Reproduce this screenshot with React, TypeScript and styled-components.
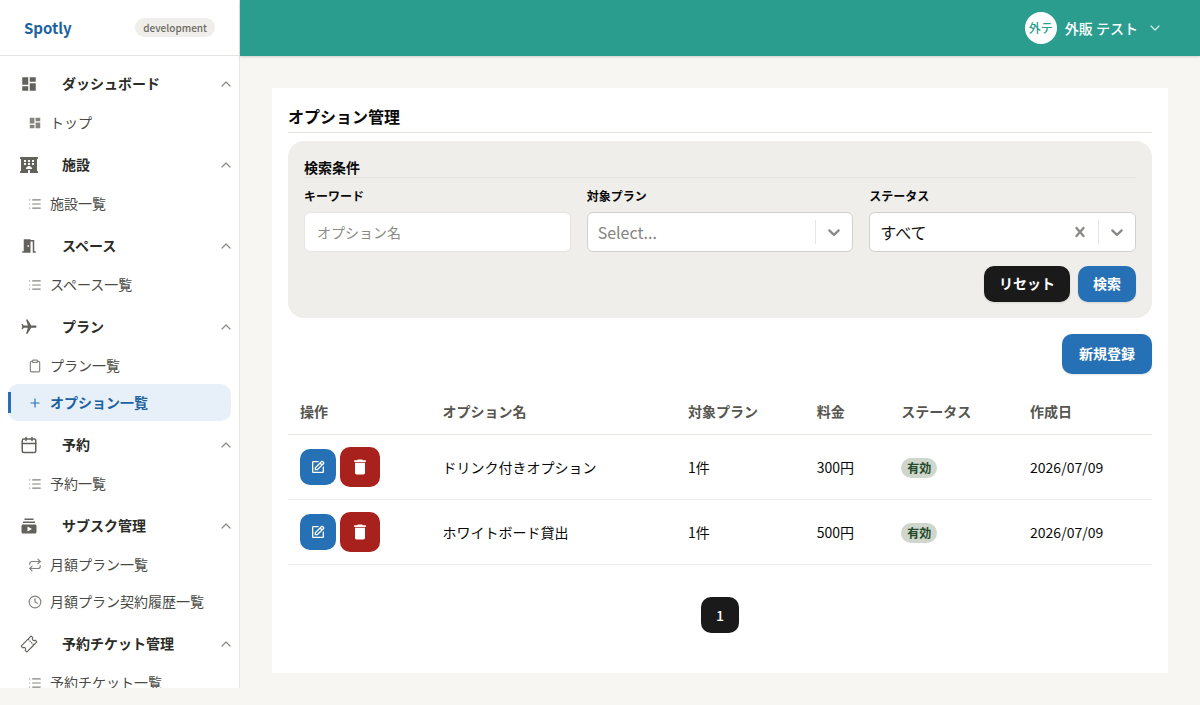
import React from "react";
import styled, { createGlobalStyle, css } from "styled-components";
import { MdDashboard, MdMeetingRoom, MdSubscriptions, MdDelete, MdFlight } from "react-icons/md";
import { FaHotel } from "react-icons/fa";
import { IoTicketOutline } from "react-icons/io5";
import { Calendar, Clipboard, Clock, List, Plus, Repeat } from "lucide-react";
import { BiEdit } from "react-icons/bi";

const GlobalStyle = createGlobalStyle`
  *, *::before, *::after { box-sizing: border-box; }
  body {
    margin: 0;
    background: #f7f6f3;
    color: #0a0a0a;
    font-family: "Noto Sans CJK JP", "Noto Sans", sans-serif;
    font-size: 14px;
    line-height: 20px;
  }
  button, input, select { font: inherit; color: inherit; margin: 0; }
  button { cursor: pointer; }
  h1, h2, p, ul { margin: 0; padding: 0; }
  ul { list-style: none; }
`;

const Shell = styled.div`
  display: flex;
  min-height: 100vh;
  align-items: flex-start;
`;

const Sidebar = styled.aside`
  flex: 0 0 240px;
  height: calc(100vh - 17px);
  overflow: hidden;
  background: #fff;
  border-right: 1px solid #e5e5e2;
`;

const Brand = styled.div`
  display: flex;
  align-items: center;
  justify-content: space-between;
  height: 56px;
  padding: 0 24px;
  border-bottom: 1px solid #e5e5e2;
`;

const Logo = styled.a`
  color: #1c629f;
  font-size: 15px;
  line-height: 24px;
  font-weight: 700;
  text-decoration: none;
`;

const EnvBadge = styled.span`
  padding: 2px 8px;
  border-radius: 10px;
  background: #efeeea;
  color: #6b6a65;
  font-size: 10px;
  line-height: 15px;
  font-weight: 500;
`;

const Nav = styled.nav`
  display: flex;
  flex-direction: column;
  gap: 4px;
  padding: 8px;
`;

const NavText = styled.span`
  padding-bottom: 2px;
`;

const GroupButton = styled.button`
  display: flex;
  align-items: center;
  width: 100%;
  height: 40px;
  padding: 0 0 0 12px;
  border: 0;
  background: none;
  color: #2b2b27;
  font-weight: 700;
  text-align: left;

  & > svg:first-child { color: #62615c; margin-right: 24px; }
  & > svg:last-child { color: #8b8a85; margin-left: auto; }
`;

const ItemLink = styled.a<{ $active?: boolean }>`
  position: relative;
  display: flex;
  align-items: center;
  gap: 8px;
  height: 37px;
  padding: 0 20px;
  border-radius: 10px;
  color: #4a4a45;
  text-decoration: none;
  white-space: nowrap;

  & > svg { color: #84837e; flex: none; }

  ${(p) =>
    p.$active &&
    css`
      background: #e7f0f9;
      color: #1c629f;
      font-weight: 700;
      & > svg { color: #2770b5; }
      &::before {
        content: "";
        position: absolute;
        left: 0;
        top: 8px;
        bottom: 8px;
        width: 3px;
        background: #2770b5;
      }
    `}
`;

const PlaneIcon = styled(MdFlight)`
  transform: rotate(90deg);
`;

const Main = styled.div`
  flex: 1;
  min-width: 0;
`;

const Topbar = styled.header`
  display: flex;
  align-items: center;
  justify-content: flex-end;
  height: 56px;
  padding: 0 40px;
  background: #2a9d8f;
  box-shadow: 0 1px 2px rgba(0, 0, 0, 0.15);
`;

const UserButton = styled.button`
  display: flex;
  align-items: center;
  gap: 8px;
  padding: 0;
  border: 0;
  background: none;
  color: #fff;
  font-weight: 500;

  & > svg { margin-left: 4px; opacity: 0.8; }
`;

const Avatar = styled.span`
  display: grid;
  place-items: center;
  width: 32px;
  height: 32px;
  border-radius: 50%;
  background: #fff;
  color: #2a9d8f;
  font-size: 12px;
  line-height: 16px;
`;

const Card = styled.main`
  margin: 32px;
  padding: 16px 16px 40px;
  background: #fff;
`;

const Title = styled.h1`
  padding-bottom: 4px;
  margin-bottom: 8px;
  border-bottom: 1px solid #e5e5e0;
  font-size: 16px;
  line-height: 24px;
  font-weight: 700;
`;

const SearchPanel = styled.form`
  padding: 16px;
  border-radius: 16px;
  background: #efeeea;
`;

const PanelTitle = styled.h2`
  border-bottom: 1px solid #e5e4e0;
  margin-bottom: 8px;
  font-size: 14px;
  line-height: 20px;
  font-weight: 700;
`;

const Fields = styled.div`
  display: grid;
  grid-template-columns: repeat(3, minmax(0, 1fr));
  gap: 16px;
`;

const Field = styled.div`
  display: flex;
  flex-direction: column;
  gap: 6px;
`;

const Label = styled.label`
  font-size: 12px;
  line-height: 20px;
  font-weight: 700;
`;

const TextInput = styled.input`
  height: 40px;
  padding: 0 12px;
  border: 1px solid #e5e4e0;
  border-radius: 6px;
  background: #fff;
  &::placeholder { color: #8b8a85; opacity: 1; }
`;

const SelectBox = styled.div`
  display: flex;
  align-items: center;
  height: 40px;
  border: 1px solid #cfd2cb;
  border-radius: 6px;
  background: #fff;
  color: #8a8985;
`;

const Select = styled.select<{ $empty?: boolean }>`
  flex: 1;
  min-width: 0;
  height: 38px;
  padding: 0 10px;
  border: 0;
  background: transparent;
  appearance: none;
  font-size: 16px;
  color: ${(p) => (p.$empty ? "#85847f" : "#141412")};
`;

const Separator = styled.span`
  width: 1px;
  height: 24px;
  background: #e5e4e0;
`;

const Indicator = styled.span`
  display: flex;
  padding: 8px;
`;

const ClearButton = styled.button`
  display: flex;
  padding: 8px;
  border: 0;
  background: none;
`;

const Actions = styled.div<{ $top: number; $bottom: number }>`
  display: flex;
  justify-content: flex-end;
  gap: 8px;
  margin: ${(p) => p.$top}px 0 ${(p) => p.$bottom}px;
`;

const tones = { dark: "#1a1a1a", blue: "#2670b5", red: "#a8211c" };

const Button = styled.button<{ $tone: keyof typeof tones; $large?: boolean }>`
  display: inline-flex;
  align-items: center;
  justify-content: center;
  height: ${(p) => (p.$large ? 40 : 36)}px;
  padding: 0 ${(p) => (p.$large ? 17 : 15)}px 2px;
  border: 0;
  border-radius: 10px;
  background: ${(p) => tones[p.$tone]};
  color: #fff;
  font-weight: 700;
  box-shadow: 0 1px 2px rgba(0, 0, 0, 0.12);
`;

const IconButton = styled(Button)`
  width: ${(p) => (p.$large ? 40 : 36)}px;
  padding: 0;
  box-shadow: none;
`;

const Table = styled.table`
  width: 100%;
  table-layout: fixed;
  border-collapse: separate;
  border-spacing: 0;
`;

const Col = styled.col<{ $share: number }>`
  width: ${(p) => p.$share}%;
`;

const Th = styled.th`
  padding: 11px 12px 13px;
  border-bottom: 1px solid #e5e5e0;
  color: #56554f;
  font-weight: 700;
  text-align: left;
`;

const Td = styled.td`
  padding: 12px;
  border-bottom: 1px solid #ececea;
`;

const RowActions = styled.div`
  display: flex;
  align-items: center;
  gap: 4px;
`;

const Status = styled.span`
  display: inline-block;
  padding: 2px 6px;
  border-radius: 10px;
  background: #cfd6cc;
  color: #24492a;
  font-size: 12px;
  line-height: 16px;
  font-weight: 700;
`;

const Pagination = styled.nav`
  display: flex;
  justify-content: center;
  margin-top: 32px;
`;

const PageButton = styled(Button)`
  padding-bottom: 0;
  font-weight: 500;
  box-shadow: none;
`;

const Chevron = ({ up }: { up?: boolean }) => (
  <svg
    width="10"
    height="6"
    viewBox="0 0 10 6"
    fill="none"
    stroke="currentColor"
    strokeWidth="1.2"
    strokeLinecap="round"
    strokeLinejoin="round"
    aria-hidden="true"
  >
    <path d={up ? "M1 5 5 1l4 4" : "m1 1 4 4 4-4"} />
  </svg>
);

const SelectArrow = () => (
  <svg width="20" height="20" viewBox="0 0 20 20" fill="currentColor" aria-hidden="true">
    <path d="M4.516 7.548c0.436-0.446 1.043-0.481 1.576 0l3.908 3.747 3.908-3.747c0.533-0.481 1.141-0.446 1.574 0 0.436 0.445 0.408 1.197 0 1.615-0.406 0.418-4.695 4.502-4.695 4.502-0.217 0.223-0.502 0.335-0.787 0.335s-0.57-0.112-0.789-0.335c0 0-4.287-4.084-4.695-4.502s-0.436-1.17 0-1.615z" />
  </svg>
);

const Cross = () => (
  <svg width="20" height="20" viewBox="0 0 20 20" fill="currentColor" aria-hidden="true">
    <path d="M14.348 14.849c-0.469 0.469-1.229 0.469-1.697 0l-2.651-3.030-2.651 3.029c-0.469 0.469-1.229 0.469-1.697 0-0.469-0.469-0.469-1.229 0-1.697l2.758-3.15-2.759-3.152c-0.469-0.469-0.469-1.228 0-1.697s1.228-0.469 1.697 0l2.652 3.031 2.651-3.031c0.469-0.469 1.228-0.469 1.697 0s0.469 1.229 0 1.697l-2.758 3.152 2.758 3.15c0.469 0.469 0.469 1.229 0 1.698z" />
  </svg>
);

type Icon = React.ComponentType<{ size?: number; strokeWidth?: number }>;

interface NavItem {
  label: string;
  icon: Icon;
  active?: boolean;
}

interface NavGroup {
  label: string;
  icon: Icon;
  items: NavItem[];
}

const groups: NavGroup[] = [
  { label: "ダッシュボード", icon: MdDashboard, items: [{ label: "トップ", icon: MdDashboard }] },
  { label: "施設", icon: FaHotel, items: [{ label: "施設一覧", icon: List }] },
  { label: "スペース", icon: MdMeetingRoom, items: [{ label: "スペース一覧", icon: List }] },
  {
    label: "プラン",
    icon: PlaneIcon,
    items: [
      { label: "プラン一覧", icon: Clipboard },
      { label: "オプション一覧", icon: Plus, active: true },
    ],
  },
  { label: "予約", icon: Calendar, items: [{ label: "予約一覧", icon: List }] },
  {
    label: "サブスク管理",
    icon: MdSubscriptions,
    items: [
      { label: "月額プラン一覧", icon: Repeat },
      { label: "月額プラン契約履歴一覧", icon: Clock },
    ],
  },
  {
    label: "予約チケット管理",
    icon: IoTicketOutline,
    items: [{ label: "予約チケット一覧", icon: List }],
  },
];

const columns = [
  { label: "操作", share: 16.5 },
  { label: "オプション名", share: 28.4 },
  { label: "対象プラン", share: 14.9 },
  { label: "料金", share: 9.8 },
  { label: "ステータス", share: 14.9 },
  { label: "作成日", share: 15.5 },
];

const rows = [
  { name: "ドリンク付きオプション", plans: "1件", price: "300円", status: "有効", date: "2026/07/09" },
  { name: "ホワイトボード貸出", plans: "1件", price: "500円", status: "有効", date: "2026/07/09" },
];

export default function App() {
  return (
    <>
      <GlobalStyle />
      <Shell>
        <Sidebar>
          <Brand>
            <Logo href="#">Spotly</Logo>
            <EnvBadge>development</EnvBadge>
          </Brand>
          <Nav aria-label="メニュー">
            {groups.map(({ label, icon: GroupIcon, items }) => (
              <div key={label}>
                <GroupButton type="button" aria-expanded="true">
                  <GroupIcon size={18} />
                  <NavText>{label}</NavText>
                  <Chevron up />
                </GroupButton>
                <ul>
                  {items.map(({ label: text, icon: ItemIcon, active }) => (
                    <li key={text}>
                      <ItemLink href="#" $active={active} aria-current={active ? "page" : undefined}>
                        <ItemIcon size={14} />
                        <NavText>{text}</NavText>
                      </ItemLink>
                    </li>
                  ))}
                </ul>
              </div>
            ))}
          </Nav>
        </Sidebar>
        <Main>
          <Topbar>
            <UserButton type="button">
              <Avatar>外テ</Avatar>
              外販 テスト
              <Chevron />
            </UserButton>
          </Topbar>
          <Card>
            <Title>オプション管理</Title>
            <SearchPanel onSubmit={(e) => e.preventDefault()}>
              <PanelTitle>検索条件</PanelTitle>
              <Fields>
                <Field>
                  <Label htmlFor="keyword">キーワード</Label>
                  <TextInput id="keyword" placeholder="オプション名" />
                </Field>
                <Field>
                  <Label htmlFor="plan">対象プラン</Label>
                  <SelectBox>
                    <Select id="plan" $empty>
                      <option>Select...</option>
                    </Select>
                    <Separator />
                    <Indicator>
                      <SelectArrow />
                    </Indicator>
                  </SelectBox>
                </Field>
                <Field>
                  <Label htmlFor="status">ステータス</Label>
                  <SelectBox>
                    <Select id="status">
                      <option>すべて</option>
                    </Select>
                    <ClearButton type="button" aria-label="クリア">
                      <Cross />
                    </ClearButton>
                    <Separator />
                    <Indicator>
                      <SelectArrow />
                    </Indicator>
                  </SelectBox>
                </Field>
              </Fields>
              <Actions $top={14} $bottom={0}>
                <Button type="reset" $tone="dark">リセット</Button>
                <Button type="submit" $tone="blue">検索</Button>
              </Actions>
            </SearchPanel>
            <Actions $top={16} $bottom={16}>
              <Button type="button" $tone="blue" $large>新規登録</Button>
            </Actions>
            <Table>
              <colgroup>
                {columns.map((c) => (
                  <Col key={c.label} $share={c.share} />
                ))}
              </colgroup>
              <thead>
                <tr>
                  {columns.map((c) => (
                    <Th key={c.label} scope="col">{c.label}</Th>
                  ))}
                </tr>
              </thead>
              <tbody>
                {rows.map((r) => (
                  <tr key={r.name}>
                    <Td>
                      <RowActions>
                        <IconButton type="button" $tone="blue" aria-label="編集">
                          <BiEdit size={16} />
                        </IconButton>
                        <IconButton type="button" $tone="red" $large aria-label="削除">
                          <MdDelete size={20} />
                        </IconButton>
                      </RowActions>
                    </Td>
                    <Td>{r.name}</Td>
                    <Td>{r.plans}</Td>
                    <Td>{r.price}</Td>
                    <Td>
                      <Status>{r.status}</Status>
                    </Td>
                    <Td>{r.date}</Td>
                  </tr>
                ))}
              </tbody>
            </Table>
            <Pagination aria-label="ページ">
              <PageButton type="button" $tone="dark" aria-current="page">1</PageButton>
            </Pagination>
          </Card>
        </Main>
      </Shell>
    </>
  );
}
